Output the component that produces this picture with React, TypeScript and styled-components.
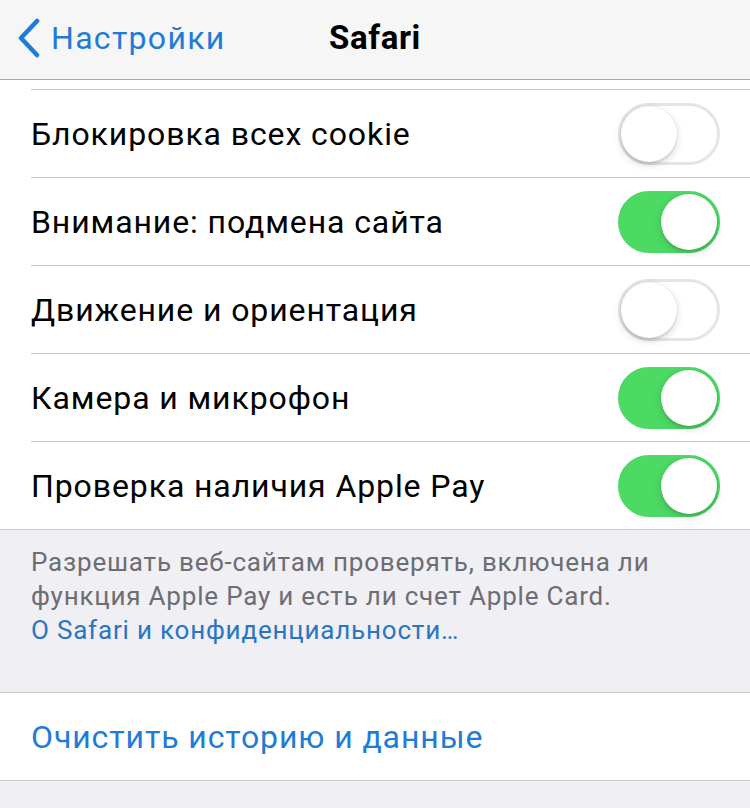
import React, { useState } from "react";
import styled, { createGlobalStyle } from "styled-components";

const GlobalStyle = createGlobalStyle`
  html, body {
    margin: 0;
    padding: 0;
    background: #efeff4;
    font-family: Roboto, "Noto Sans", "Liberation Sans", sans-serif;
  }
`;

interface ToggleItem {
  label: string;
  on: boolean;
}

const items: ToggleItem[] = [
  { label: "Блокировка всех cookie", on: false },
  { label: "Внимание: подмена сайта", on: true },
  { label: "Движение и ориентация", on: false },
  { label: "Камера и микрофон", on: true },
  { label: "Проверка наличия Apple Pay", on: true },
];

const App = () => {
  const [state, setState] = useState(items.map((i) => i.on));

  const flip = (idx: number) =>
    setState((prev) => prev.map((v, i) => (i === idx ? !v : v)));

  return (
    <Page>
      <GlobalStyle />
      <NavBar>
        <BackButton>
          <svg width="26" height="40" viewBox="0 0 26 40">
            <path
              d="M21 3 L5 20 L21 37"
              fill="none"
              stroke="#1f7bd8"
              strokeWidth="4.5"
              strokeLinecap="round"
              strokeLinejoin="round"
            />
          </svg>
          <span>Настройки</span>
        </BackButton>
        <Title>Safari</Title>
        <span />
      </NavBar>

      <Group>
        <TopStub />
        {items.map((item, idx) => (
          <Row key={item.label} last={idx === items.length - 1}>
            <Label>{item.label}</Label>
            <Switch on={state[idx]} onClick={() => flip(idx)}>
              <Knob on={state[idx]} />
            </Switch>
          </Row>
        ))}
      </Group>

      <Footer>
        Разрешать веб-сайтам проверять, включена ли функция Apple Pay и есть
        ли счет Apple Card.
        <FooterLink>О Safari и конфиденциальности…</FooterLink>
      </Footer>

      <Group bordered>
        <ActionRow>Очистить историю и данные</ActionRow>
      </Group>
    </Page>
  );
};

const Page = styled.div`
  width: 750px;
  min-height: 808px;
  background: #efeff4;
`;

const NavBar = styled.div`
  display: grid;
  grid-template-columns: 1fr auto 1fr;
  align-items: center;
  background: #f6f6f6;
  border-bottom: 1px solid #a9a9a9;
  box-sizing: border-box;
  height: 80px;
`;

const BackButton = styled.div`
  display: flex;
  align-items: center;
  gap: 9px;
  padding-left: 16px;
  color: #1f7bd8;
  font-size: 32px;
  letter-spacing: 1.3px;
  margin-top: -4px;
`;

const Title = styled.div`
  font-size: 33px;
  font-weight: 700;
  letter-spacing: 0.6px;
  color: #000;
  margin-top: -4px;
`;

const Group = styled.div<{ bordered?: boolean }>`
  background: #fff;
  border-top: ${({ bordered }) => (bordered ? "1px solid #c8c7cc" : "none")};
  border-bottom: 1px solid #c8c7cc;
`;

const TopStub = styled.div`
  height: 9px;
  margin-left: 31px;
  border-bottom: 1px solid #c8c7cc;
`;

const Row = styled.div<{ last?: boolean }>`
  height: 87px;
  display: flex;
  align-items: center;
  justify-content: space-between;
  margin-left: 31px;
  padding-right: 30px;
  border-bottom: ${({ last }) => (last ? "none" : "1px solid #c8c7cc")};
`;

const Label = styled.div`
  font-size: 32px;
  letter-spacing: 0.9px;
  color: #000;
`;

const Switch = styled.div<{ on: boolean }>`
  position: relative;
  width: 102px;
  height: 62px;
  border-radius: 31px;
  box-sizing: border-box;
  background: ${({ on }) => (on ? "#4cd964" : "#fff")};
  border: 3px solid ${({ on }) => (on ? "#4cd964" : "#e5e5e5")};
  cursor: pointer;
`;

const Knob = styled.div<{ on: boolean }>`
  position: absolute;
  top: 0;
  left: ${({ on }) => (on ? "40px" : "0")};
  width: 56px;
  height: 56px;
  border-radius: 50%;
  background: #fff;
  box-shadow: 0 3px 8px rgba(0, 0, 0, 0.15), 0 3px 1px rgba(0, 0, 0, 0.06),
    0 0 0 0.5px rgba(0, 0, 0, 0.08);
`;

const Footer = styled.div`
  padding: 15px 31px 0;
  height: 162px;
  box-sizing: border-box;
  font-size: 26px;
  letter-spacing: 0.8px;
  line-height: 34px;
  color: #6d6d72;
`;

const FooterLink = styled.div`
  color: #2a74c4;
`;

const ActionRow = styled.div`
  height: 87px;
  display: flex;
  align-items: center;
  padding-left: 31px;
  font-size: 32px;
  letter-spacing: 0.9px;
  color: #1f7bd8;
`;

export default App;
